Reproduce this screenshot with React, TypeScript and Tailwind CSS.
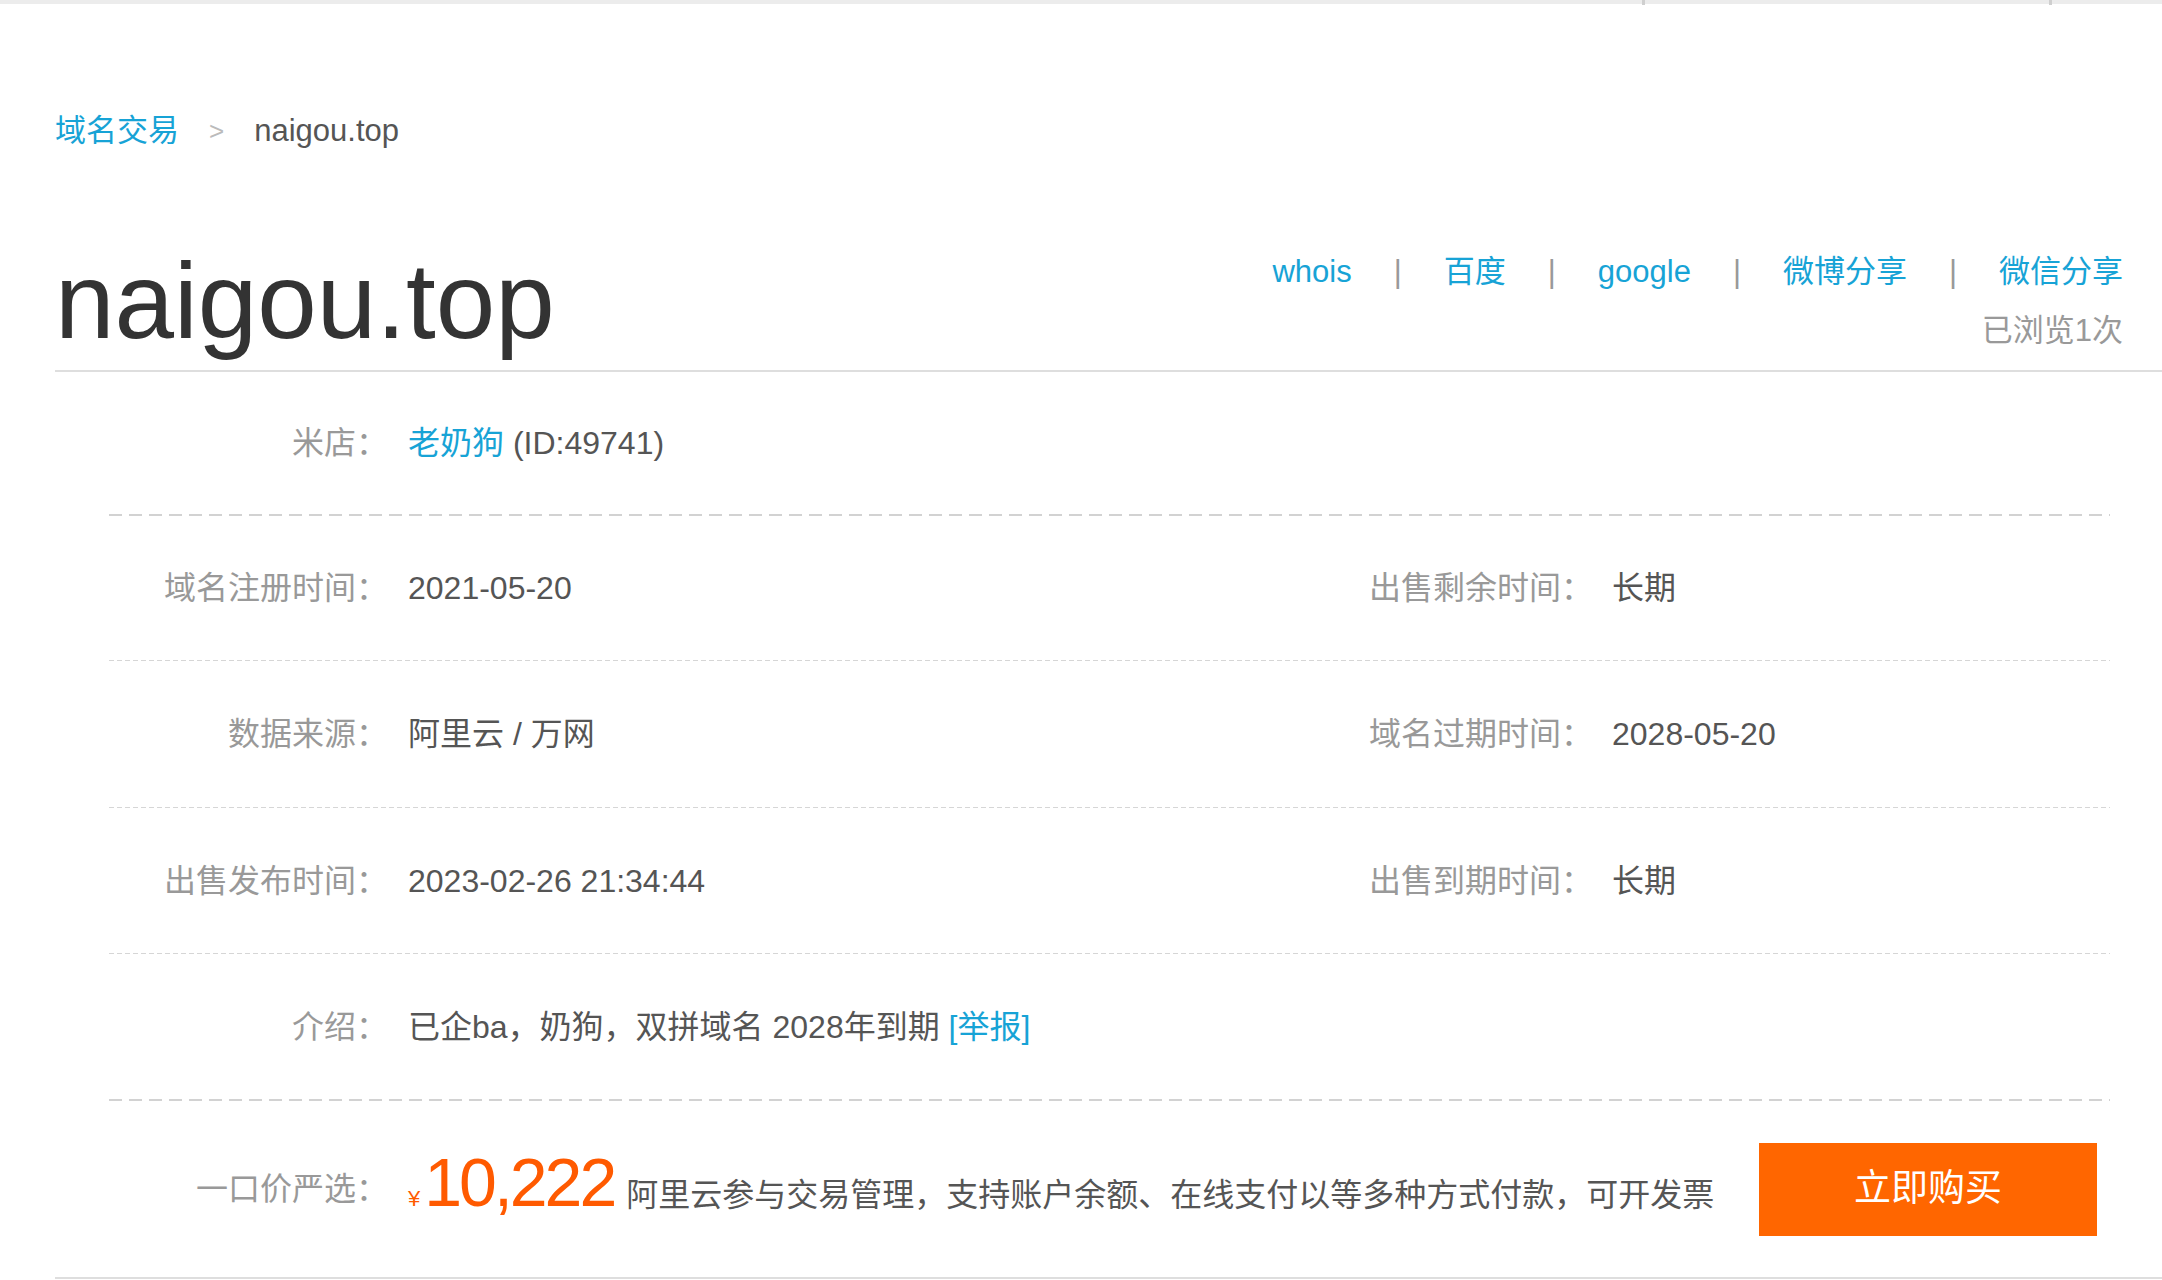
import React from "react";

const FONT = "font-['Liberation_Sans','Noto_Sans_CJK_SC',sans-serif]";

function ThinSep() {
  return (
    <div className="h-[1px] bg-[repeating-linear-gradient(to_right,#d6d6d6_0_5px,transparent_5px_8px)]" />
  );
}

function ThickSep() {
  return (
    <div className="h-[2px] bg-[repeating-linear-gradient(to_right,#d2d2d2_0_13px,transparent_13px_20px)]" />
  );
}

function LeftCell({ label, children }: { label: string; children: React.ReactNode }) {
  return (
    <div className="flex w-[1260px] items-center">
      <span className="w-[279px] text-right text-[#999]">{label}</span>
      <span className="ml-[20px] text-[#555]">{children}</span>
    </div>
  );
}

function RightCell({ label, children }: { label: string; children: React.ReactNode }) {
  return (
    <div className="flex items-center">
      <span className="w-[224px] text-right text-[#999]">{label}</span>
      <span className="ml-[19px] text-[#555]">{children}</span>
    </div>
  );
}

export default function App() {
  return (
    <div className={`${FONT} min-h-[1280px] w-[2162px] overflow-hidden bg-white`}>
      {/* top bar */}
      <div className="relative h-[4px] bg-[#ececec]">
        <div className="absolute left-[1642px] top-0 h-[5px] w-[3px] bg-[#cfcfcf]" />
        <div className="absolute left-[2049px] top-0 h-[5px] w-[3px] bg-[#cfcfcf]" />
      </div>

      {/* breadcrumb */}
      <div className="ml-[55px] mt-[107px] flex h-[40px] items-center text-[31px] leading-[40px]">
        <span className="text-[#17a3d6]">域名交易</span>
        <span className="ml-[30px] mr-[30px] text-[26px] text-[#bbb]">&gt;</span>
        <span className="text-[#555]">naigou.top</span>
      </div>

      {/* header */}
      <div className="ml-[55px] mt-[97px] flex items-start justify-between border-b-2 border-[#dedede] pb-[16px] pr-[39px]">
        <h1 className="text-[107px] font-normal leading-[106px] text-[#333]">naigou.top</h1>
        <div className="mt-[4px] flex flex-col items-end">
          <div className="flex h-[40px] items-center text-[31px] leading-[40px] text-[#17a3d6]">
            <span>whois</span>
            <span className="mx-[42px] text-[#999]">|</span>
            <span>百度</span>
            <span className="mx-[42px] text-[#999]">|</span>
            <span>google</span>
            <span className="mx-[42px] text-[#999]">|</span>
            <span>微博分享</span>
            <span className="mx-[42px] text-[#999]">|</span>
            <span>微信分享</span>
          </div>
          <div className="mt-[19px] h-[40px] text-[31px] leading-[40px] text-[#999]">已浏览1次</div>
        </div>
      </div>

      {/* info rows */}
      <div className="ml-[109px] w-[2001px] text-[32px] leading-[40px]">
        <div className="flex h-[142px] items-center">
          <LeftCell label="米店：">
            <span className="text-[#17a3d6]">老奶狗</span> (ID:49741)
          </LeftCell>
        </div>
        <ThickSep />
        <div className="flex h-[144px] items-center">
          <LeftCell label="域名注册时间：">2021-05-20</LeftCell>
          <RightCell label="出售剩余时间：">长期</RightCell>
        </div>
        <ThinSep />
        <div className="flex h-[146px] items-center">
          <LeftCell label="数据来源：">阿里云 / 万网</LeftCell>
          <RightCell label="域名过期时间：">2028-05-20</RightCell>
        </div>
        <ThinSep />
        <div className="flex h-[145px] items-center">
          <LeftCell label="出售发布时间：">2023-02-26 21:34:44</LeftCell>
          <RightCell label="出售到期时间：">长期</RightCell>
        </div>
        <ThinSep />
        <div className="flex h-[145px] items-center">
          <LeftCell label="介绍：">
            已企ba，奶狗，双拼域名 2028年到期{" "}
            <span className="text-[#17a3d6]">[举报]</span>
          </LeftCell>
        </div>
        <ThickSep />
      </div>

      {/* price row */}
      <div className="ml-[55px] border-b-2 border-[#dedede]">
        <div className="ml-[54px] flex h-[176px] w-[2001px] items-center text-[32px] leading-[40px]">
          <span className="w-[279px] text-right text-[#999]">一口价严选：</span>
          <div className="mb-[12px] ml-[20px] flex items-baseline">
            <span className="text-[22px] text-[#ff5a00]">¥</span>
            <span className="ml-[4px] text-[68px] leading-[70px] tracking-[-3px] text-[#ff5a00]">
              10,222
            </span>
            <span className="ml-[12px] text-[#555]">
              阿里云参与交易管理，支持账户余额、在线支付以等多种方式付款，可开发票
            </span>
          </div>
          <button className="ml-auto mr-[13px] h-[93px] w-[338px] bg-[#ff6600] text-[37px] text-white">
            立即购买
          </button>
        </div>
      </div>
    </div>
  );
}
